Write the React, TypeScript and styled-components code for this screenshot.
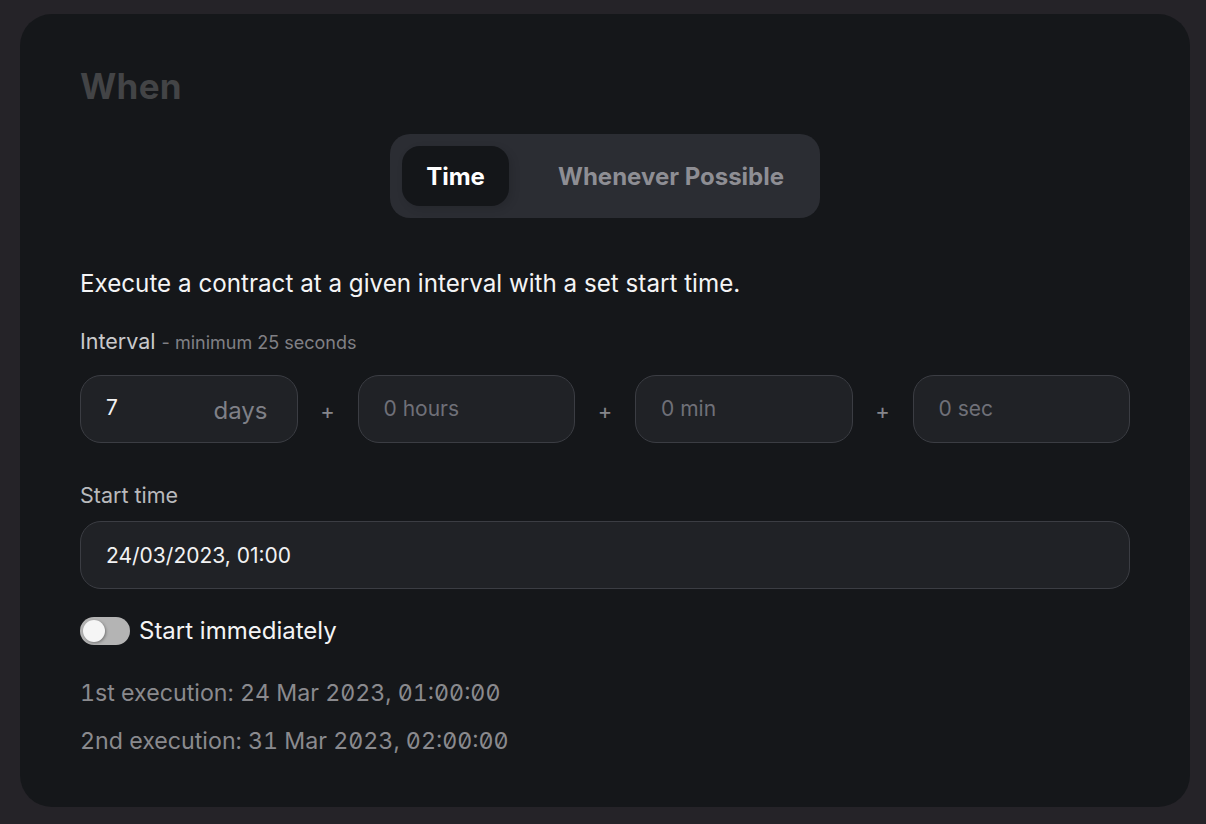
import React from "react";
import styled, { createGlobalStyle } from "styled-components";

const Global = createGlobalStyle`
  html, body { margin: 0; padding: 0; background: #252328; }
  body { font-family: Inter, "Noto Sans", sans-serif; -webkit-font-smoothing: antialiased; }
  * { box-sizing: border-box; }
`;

const Page = styled.div`
  padding: 14px 16px 17px 20px;
  min-height: 824px;
`;

const Card = styled.div`
  width: 1170px;
  background: #15171a;
  border-radius: 32px;
  padding: 50px 60px 51px 60px;
  display: flex;
  flex-direction: column;
`;

const Title = styled.h2`
  margin: 0;
  font-size: 35px;
  line-height: 44px;
  font-weight: 700;
  color: #434446;
  letter-spacing: 0.3px;
`;

const SegWrap = styled.div`
  align-self: center;
  margin-top: 26px;
  display: flex;
  align-items: center;
  background: #2b2d33;
  border-radius: 20px;
  padding: 12px;
  width: 430px;
  height: 84px;
`;

const Seg = styled.div<{ $active?: boolean }>`
  height: 60px;
  display: flex;
  align-items: center;
  justify-content: ${(p) => (p.$active ? "center" : "flex-start")};
  padding-left: ${(p) => (p.$active ? "0" : "49px")};
  border-radius: 18px;
  font-size: 24px;
  font-weight: 700;
  color: ${(p) => (p.$active ? "#ffffff" : "#8e8e94")};
  background: ${(p) => (p.$active ? "#141619" : "transparent")};
  box-shadow: ${(p) => (p.$active ? "3px 3px 8px rgba(0,0,0,0.12)" : "none")};
  flex: ${(p) => (p.$active ? "0 0 107px" : "1")};
`;

const Desc = styled.p`
  margin: 51px 0 0 0;
  font-size: 24.2px;
  line-height: 30px;
  color: #f4f4f5;
`;

const Label = styled.div`
  margin-top: 29px;
  font-size: 21.5px;
  line-height: 26px;
  color: #c9c9cb;
`;

const Hint = styled.span`
  font-size: 18px;
  color: #808085;
`;

const IntervalRow = styled.div`
  margin-top: 19px;
  display: flex;
  align-items: center;
`;

const Field = styled.div`
  flex: 1;
  height: 68px;
  border-radius: 21px;
  background: #202226;
  border: 1px solid #3b3d43;
  display: flex;
  align-items: center;
  padding: 0 25px;
  font-size: 21px;
`;

const Value = styled.span`
  color: #f2f2f3;
  flex: 1;
  margin-top: -4px;
`;

const Unit = styled.span`
  color: #7f8087;
  font-size: 24px;
  margin-top: 2px;
  margin-right: 4px;
`;

const Placeholder = styled.span`
  color: #6f7078;
  margin-top: -2px;
`;

const Plus = styled.span`
  width: 60px;
  text-align: center;
  color: #85868b;
  font-size: 22px;
  margin-top: 4px;
`;

const StartLabel = styled(Label)`
  margin-top: 39px;
  font-size: 21.5px;
  color: #b9babd;
`;

const WideField = styled(Field)`
  margin-top: 13px;
  flex: none;
  width: 100%;
  color: #f2f2f3;
`;

const SwitchRow = styled.div`
  margin-top: 27px;
  display: flex;
  align-items: center;
  gap: 9px;
  font-size: 24px;
  line-height: 30px;
  color: #f4f4f5;
`;

const Switch = styled.div`
  position: relative;
  width: 50px;
  height: 28px;
  border-radius: 14px;
  background: #b4b4b4;
`;

const Knob = styled.div`
  position: absolute;
  left: 3px;
  top: 3px;
  width: 22px;
  height: 22px;
  border-radius: 50%;
  background: #f5f5f5;
  box-shadow: 1px 1px 3px rgba(0,0,0,0.35);
`;

const Execs = styled.div`
  margin-top: 32px;
  display: flex;
  flex-direction: column;
  gap: 18px;
`;

const Exec = styled.div`
  font-size: 23.2px;
  line-height: 30px;
  color: #8a8a8e;
  font-feature-settings: "tnum" 1, "zero" 1;
`;

export default function App() {
  return (
    <>
      <Global />
      <Page>
        <Card>
          <Title>When</Title>
          <SegWrap>
            <Seg $active>Time</Seg>
            <Seg>Whenever Possible</Seg>
          </SegWrap>
          <Desc>Execute a contract at a given interval with a set start time.</Desc>
          <Label>
            Interval <Hint>- minimum 25 seconds</Hint>
          </Label>
          <IntervalRow>
            <Field>
              <Value>7</Value>
              <Unit>days</Unit>
            </Field>
            <Plus>+</Plus>
            <Field>
              <Placeholder>0 hours</Placeholder>
            </Field>
            <Plus>+</Plus>
            <Field>
              <Placeholder>0 min</Placeholder>
            </Field>
            <Plus>+</Plus>
            <Field>
              <Placeholder>0 sec</Placeholder>
            </Field>
          </IntervalRow>
          <StartLabel>Start time</StartLabel>
          <WideField>24/03/2023, 01:00</WideField>
          <SwitchRow>
            <Switch>
              <Knob />
            </Switch>
            Start immediately
          </SwitchRow>
          <Execs>
            <Exec>1st execution: 24 Mar 2023, 01:00:00</Exec>
            <Exec>2nd execution: 31 Mar 2023, 02:00:00</Exec>
          </Execs>
        </Card>
      </Page>
    </>
  );
}
